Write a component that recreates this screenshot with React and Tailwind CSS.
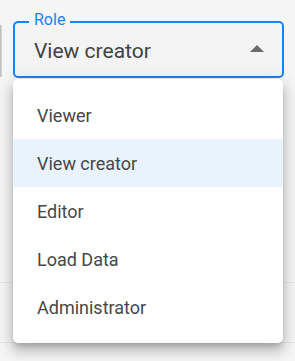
import React from "react";

const items = ["Viewer", "View creator", "Editor", "Load Data", "Administrator"];

export default function App() {
  return (
    <div
      className="relative w-[295px] h-[361px] overflow-hidden bg-[#f5f5f5] flex flex-col"
      style={{ fontFamily: "Roboto, 'Liberation Sans', sans-serif" }}
    >
      {/* top row: side bar + select field */}
      <div className="flex items-start gap-[11px] pt-[21px]">
        <div className="mt-[4px] w-[2px] h-[52px] bg-gradient-to-r from-[#bdbdbd] to-[#d6d6d6]" />
        <div className="relative w-[271px] h-[57px] rounded-[5px] border-2 border-[#1a82f7] bg-[#f4f4f4] flex items-center pl-[19px] pr-[18px]">
          <span className="absolute left-[14px] -top-[13px] px-[5px] bg-[#f5f5f5] text-[16px] leading-[20px] text-[#1a82f7]">
            Role
          </span>
          <span className="flex-1 text-[21px] leading-[24px] text-[#424242] mt-[2px]">View creator</span>
          <svg width="14" height="7" viewBox="0 0 14 7" className="mt-[-2px]">
            <path d="M0 7 L7 0 L14 7 Z" fill="#6b6b6b" />
          </svg>
        </div>
      </div>

      {/* background rows */}
      <div className="mt-[204px] h-px bg-[#e6e6e6]" />
      <div className="mt-[59px] h-px bg-[#e6e6e6]" />

      {/* menu (overlay) */}
      <div className="absolute left-[13px] top-[79px] w-[270px] rounded-[5px] bg-white py-[12px] shadow-[0_5px_6px_-3px_rgba(0,0,0,0.2),0_9px_12px_1px_rgba(0,0,0,0.14),0_3px_16px_2px_rgba(0,0,0,0.12)]">
        {items.map((it) => (
          <div
            key={it}
            className={`h-[48px] flex items-center pl-[24px] text-[18px] text-[#474747] ${
              it === "View creator" ? "bg-[#e9f3fe]" : ""
            }`}
          >
            {it}
          </div>
        ))}
      </div>
    </div>
  );
}
